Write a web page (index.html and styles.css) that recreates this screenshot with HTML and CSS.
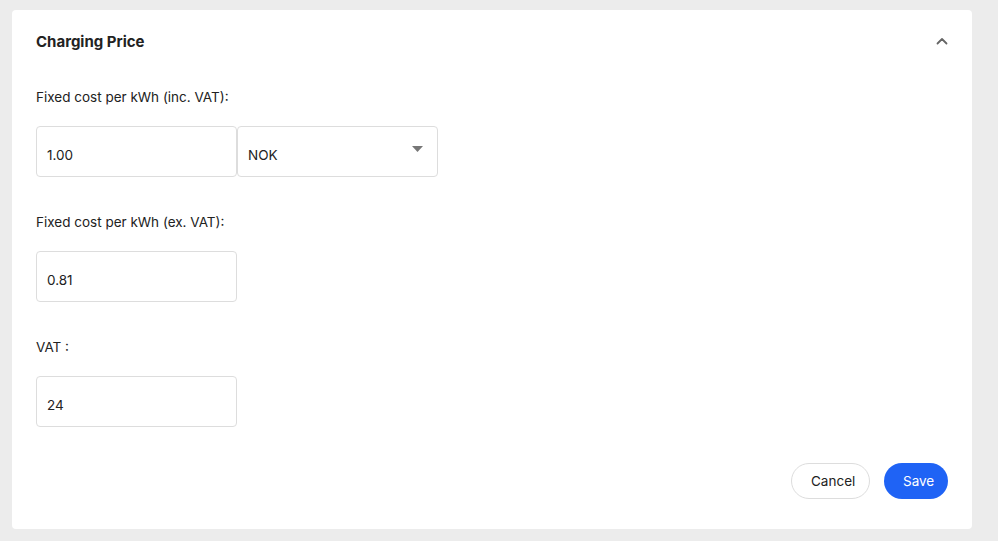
FILE: index.html
```html
<!DOCTYPE html>
<html lang="en">
<head>
    <meta charset="UTF-8">
    <meta name="viewport" content="width=device-width, initial-scale=1.0">
    <title>Charging Price</title>
    <link rel="stylesheet" href="styles.css">
</head>
<body>
    <div class="card">
        <div class="card-head">
            <h2>Charging Price</h2>
            <svg class="chevron" width="12" height="8" viewBox="0 0 12 8">
                <path d="M1.5 6.5 L6 2 L10.5 6.5" fill="none" stroke="#666" stroke-width="1.8" stroke-linecap="round" stroke-linejoin="round"/>
            </svg>
        </div>

        <div class="field">
            <label>Fixed cost per kWh (inc. VAT):</label>
            <div class="row">
                <div class="input">1.00</div>
                <div class="input select">
                    <span>NOK</span>
                    <svg width="11" height="6" viewBox="0 0 11 6"><path d="M0 0 H11 L5.5 6 Z" fill="#777"/></svg>
                </div>
            </div>
        </div>

        <div class="field">
            <label>Fixed cost per kWh (ex. VAT):</label>
            <div class="row">
                <div class="input">0.81</div>
            </div>
        </div>

        <div class="field">
            <label>VAT :</label>
            <div class="row">
                <div class="input">24</div>
            </div>
        </div>

        <div class="actions">
            <button class="btn btn-cancel">Cancel</button>
            <button class="btn btn-save">Save</button>
        </div>
    </div>
</body>
</html>
```

FILE: styles.css
```css
* { margin: 0; padding: 0; box-sizing: border-box; }
body {
    background: #ececec;
    font-family: Inter, "Liberation Sans", sans-serif;
    color: #222;
    padding: 10px 26px 12px 12px;
}
.card {
    background: #fff;
    border-radius: 4px;
    padding: 0 24px 30px;
}
.card-head {
    display: flex;
    justify-content: space-between;
    align-items: center;
    padding: 22px 0 20px;
}
.card-head h2 {
    font-size: 15px;
    font-weight: 700;
    line-height: 20px;
    color: #222;
}
.chevron { margin-right: 0; margin-top: -3px; }
.field { padding-top: 15px; }
.field + .field { padding-top: 35px; }
.field label {
    display: block;
    font-size: 13.5px;
    line-height: 20px;
    color: #222;
    margin-bottom: 19px;
}
.row { display: flex; }
.input {
    width: 201px;
    height: 51px;
    border: 1px solid #ddd;
    border-radius: 4px;
    padding: 0 10px;
    display: flex;
    align-items: center;
    font-size: 13.5px;
    padding-top: 6px;
}
.select {
    justify-content: space-between;
    padding-right: 14px;
}
.select svg { margin-top: -12px; }
.actions {
    display: flex;
    justify-content: flex-end;
    gap: 14px;
    padding-top: 36px;
}
.btn {
    height: 36px;
    border-radius: 18px;
    font-family: inherit;
    font-size: 13.5px;
    padding: 0 19px;
    cursor: pointer;
}
.btn-cancel {
    background: #fff;
    border: 1px solid #ddd;
    color: #222;
    width: 79px;
}
.btn-save {
    background: #1f63f5;
    border: none;
    color: #fff;
    width: 64px;
}
```
